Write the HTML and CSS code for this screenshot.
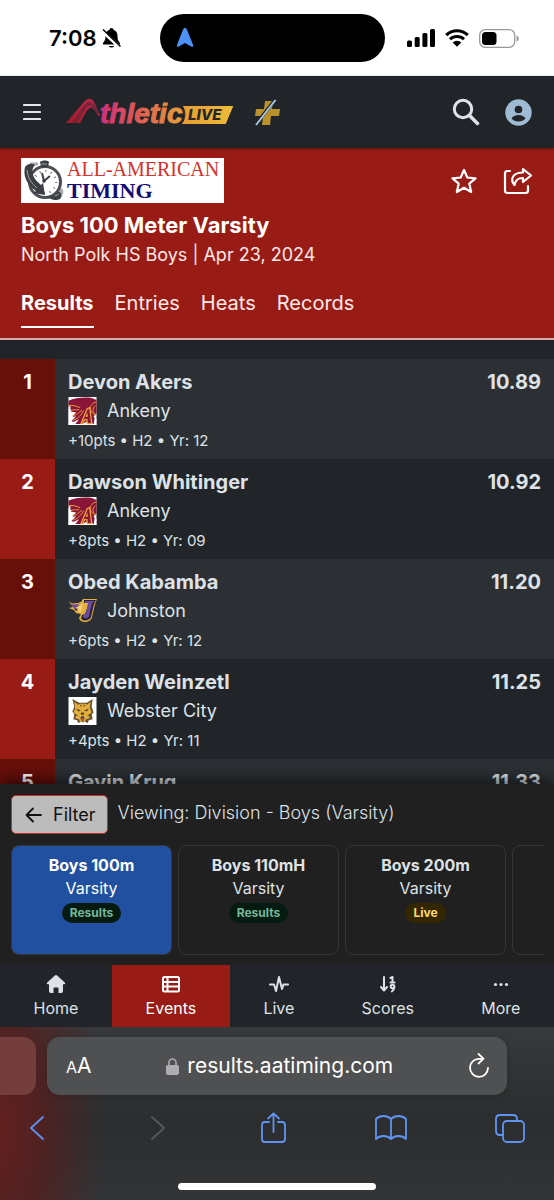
FILE: index.html
```html
<!DOCTYPE html>
<html lang="en">
<head>
<meta charset="utf-8">
<meta name="viewport" content="width=device-width, initial-scale=1">
<title>Boys 100 Meter Varsity - AthleticLIVE</title>
<link rel="stylesheet" href="styles.css">
</head>
<body>
<svg class="defs" width="0" height="0" aria-hidden="true">
  <symbol id="ankeny" viewBox="0 0 29 29">
    <path fill="#fff" d="M0 0h29v29H0z"/>
    <path fill="#8b1538" d="M0 4C6 1 16 0 24 1l5 2v14l-3 3 3 5v3h-4l-1-4-4 1-6 3H7l4-5-6 3H2l6-6-5 1 5-5-6-1V9l-2 1z"/>
    <path fill="none" stroke="#e8a33a" stroke-width="1" d="M0 9c5-1 9 1 12 2M1 15c4-3 6-1 10-2M4 19c4 1 7-4 10-5M5 24c6-2 8-6 11-10M29 5c-9 3-8 10-1 14M28 9c-4 3-3 7 0 9"/>
    <path fill="#8b1538" stroke="#eea83d" stroke-width="1.300" d="M13 27.500 19.500 12l2.500-1 2 16.500h-4.500l-.5-4h-2.500l-1.500 4z"/>
    <path fill="#e8a33a" d="m17.500 20.500 2-4.500.5 4.500z"/>
    <path fill="#fff" d="M0 12l3 2-2 3 4 3-5 4zM0 24l6 2-2 3H0zM27 22l2 1v6h-3z"/>
  </symbol>
  <symbol id="johnston" viewBox="0 0 29 26">
    <path fill="#e5b23f" d="M0 3c4 4 8 2 13 1l2-3h14l-2 5-3 13c-1 6-12 7-13 1l2-4-5-1-2-3-5-2 4-1z"/>
    <path fill="#29223a" d="M16 2h12l-2 4-3 13c-1 4-9 5-10 1l1-3 3-1 4-11h-5z"/>
    <path fill="#6c4a9c" d="M17 3h9l-1 2h-1l-3 13c-1 3-6 3-6 0l1-2h2l2-11h-3zM2 5c4 3 7 1 10 0l-3 3 4-1-3 4H7L4 8z"/>
    <path fill="#f3cf79" d="M11 8l4-2-2 8-4-1 2-2-4-1z"/>
    <path fill="#29223a" d="M8 4l3-2-1 3zM6 10l4 2-2 1z"/>
  </symbol>
  <symbol id="webster" viewBox="0 0 29 29">
    <path fill="#fff" d="M0 0h29v29H0z"/>
    <path fill="#6a5030" d="M4 2l7 4h8l6-4-1 8 2 6-2 2 1 5-4 1-1 3-4-2-1 2-1-2-4 2-1-3-4-1 1-5-2-3 2-5z"/>
    <path fill="#e2b03a" d="M6 5l4 3 2-1h5l2 1 4-3-1 6 2 5-3 2 1 4-4 1-1 3-2-2h-1l-2 2-1-3-4-1 1-4-3-2 2-4z"/>
    <path fill="#5b4326" d="M12 8l1 3 .5-3zM15.500 8l.5 3 1-3zM8 12l5 2-3 1zM21 12l-5 2 3 1zM13 16h3l.5 1.500-2 1.500-2-1.500zM12 20h5l-1 4h-3zM7 18l3 1-3 1zM22 18l-3 1 3 1z"/>
    <path fill="#d55849" d="M13.500 22h2v2h-2z"/>
    <path fill="#fff" d="M12 20h1v1.500zM16 20h1l-1 1.500z"/>
  </symbol>
</svg>

<div class="screen">
  <div class="status">
    <div class="status-left">
      <span class="clock">7:08</span>
      <svg width="19" height="22" viewBox="0 0 19 22" aria-label="Silent">
        <path d="M9.500 1c-1.200 0-2 .8-2 1.800C4.800 3.700 3.500 6 3.500 9c0 4-1 5-2.500 7v1.500h17V16c-1.500-2-2.500-3-2.500-7 0-3-1.300-5.300-4-6.200 0-1-.8-1.800-2-1.800zM6.700 19a3 2.500 0 0 0 5.600 0z"/>
        <path d="M0 3.500 18 20.500" stroke="#fff" stroke-width="3.500"/>
        <path d="M1 2.500 18.500 19.500" stroke="#000" stroke-width="1.500"/>
      </svg>
    </div>
    <div class="island">
      <svg width="18" height="20" viewBox="0 0 18 20" aria-hidden="true"><path fill="#4d91f7" d="M9 0c1 0 1.500.6 2 1.700l6 15c.6 1.700-.4 2.700-1.800 1.900L9 15l-6.200 3.600C1.400 19.400.4 18.400 1 16.700l6-15C7.500.6 8 0 9 0z"/></svg>
    </div>
    <div class="status-right">
      <svg width="28" height="18" viewBox="0 0 28 18" aria-label="Signal"><rect y="11.500" width="5" height="6.500" rx="1.500"/><rect x="7.700" y="8" width="5" height="10" rx="1.500"/><rect x="15.400" y="4" width="5" height="14" rx="1.500"/><rect x="23" width="5" height="18" rx="1.500"/></svg>
      <svg width="24" height="18" viewBox="0 0 24 18" aria-label="Wi-Fi"><path d="M1.200 6.200a15.500 15.500 0 0 1 21.600 0M5 10.300a10 10 0 0 1 14 0" fill="none" stroke="#000" stroke-width="3"/><path d="M7.700 13.500a6.200 6.200 0 0 1 8.600 0L12 17.800z"/></svg>
      <svg width="40" height="19" viewBox="0 0 40 19" aria-label="Battery"><rect x=".7" y=".7" width="35" height="17.600" rx="5.500" fill="none" stroke="#999" stroke-width="1.300"/><rect x="3" y="3" width="14.500" height="13" rx="3.500"/><path fill="#999" d="M37.500 6.500c3 1 3 5 0 6z"/></svg>
    </div>
  </div>

  <header class="topbar">
    <button class="icon-btn" aria-label="Menu"><svg width="18" height="18" viewBox="0 0 18 18"><path d="M1 2h16M1 9h16M1 16h16" stroke="#e4e8ee" stroke-width="2.200" stroke-linecap="round"/></svg></button>
    <a class="brand" href="#" aria-label="AthleticLIVE">
      <svg width="168" height="36" viewBox="0 -2 168 36">
        <defs>
          <linearGradient id="bg" gradientUnits="userSpaceOnUse" x1="34" y1="0" x2="118" y2="0"><stop offset="0" stop-color="#cb2f7c"/><stop offset=".45" stop-color="#dd5a52"/><stop offset="1" stop-color="#e5a33a"/></linearGradient>
          <linearGradient id="ag" x1="0" y1="1" x2="1" y2="0"><stop offset="0" stop-color="#a31d2b"/><stop offset="1" stop-color="#b8274f"/></linearGradient>
          <linearGradient id="lg" x1="0" y1="0" x2="1" y2="0"><stop offset="0" stop-color="#e79a32"/><stop offset="1" stop-color="#eebc3c"/></linearGradient>
        </defs>
        <path fill="url(#ag)" d="M0 27 17 7c4-5 8-6 11-1l6 13-2 1c-3-6-6-9-8-8-3 1-6 8-10 15z"/>
        <path fill="none" stroke="#25282d" stroke-width=".8" d="M7 27C13 19 18 9 22 7s7 5 11 10M10 27c5-8 8-15 12-18 3-2 6 4 10 9"/>
        <text class="brand-word" x="34" y="27" fill="url(#bg)">thletic</text>
        <path fill="url(#lg)" stroke="#212529" stroke-width="1" d="M116 9.500h52l-8 19h-45c5-6 5-13 1-19z"/>
        <text class="brand-live" x="122" y="24">LIVE</text>
      </svg>
    </a>
    <a class="plus" href="#" aria-label="Plus"><svg width="27" height="28" viewBox="0 0 27 28"><path fill="#b9922b" d="M11 2h8l-1 8h8l-1 7h-8l-1 9H8l1-9H1l1-7h8z"/><path d="M21 1 2 25" stroke="#22262a" stroke-width="3.500"/><path d="M21.500 1 2 26" stroke="#a9cbe9" stroke-width="1.900"/></svg></a>
    <button class="icon-btn search" aria-label="Search"><svg width="28" height="28" viewBox="0 0 28 28"><circle cx="11" cy="11" r="8.700" fill="none" stroke="#dfe3e8" stroke-width="3"/><path d="m17.500 17.500 8 8" stroke="#dfe3e8" stroke-width="3.500" stroke-linecap="round"/></svg></button>
    <button class="icon-btn" aria-label="Account"><svg width="27" height="27" viewBox="0 0 27 27"><circle cx="13.500" cy="13.500" r="13.200" fill="#9fbbd3"/><circle cx="13.500" cy="10.500" r="3.800" fill="#212529"/><path fill="#212529" d="M6.500 19.500c2-4.800 12-4.800 14 0-3 4-11 4-14 0z"/></svg></button>
  </header>

  <section class="event">
    <div class="event-top">
      <svg class="sponsor" width="203" height="45" viewBox="0 0 203 45" role="img" aria-label="All-American Timing">
        <path fill="#fff" d="M0 0h203v45H0z"/>
        <path fill="none" stroke="#a7a9ac" stroke-width="3" d="M9 6h8M40 31c2 4 0 8-5 8"/>
        <circle cx="24" cy="24" r="15.500" fill="#fff" stroke="#4a4d52" stroke-width="3"/>
        <circle cx="24" cy="24" r="11" fill="none" stroke="#77797d" stroke-width="2.500" stroke-dasharray="1 4.760"/>
        <path fill="#3b3e43" d="M4 9c3-4 7-4 10-2-5 5-3 13 6 20l2-2 2 12-12-2 3-2C5 26 2 17 4 9zM19 4c2-2 8-2 9 0l-1 5h-7zM26 39l7-1 5-5c4 4 3 9-3 9-4 0-5-1-9-3z"/>
        <path stroke="#3b3e43" stroke-width="2" fill="none" d="m21 15 2 8 6-5"/><circle cx="23" cy="23" r="1.800" fill="#3b3e43"/>
        <path fill="none" stroke="#bbb" stroke-width=".8" d="M6 12c1 8 4 13 10 18M20 6h6M34 38l4-2"/>
        <text class="sponsor-a" x="46" y="18">ALL-AMERICAN</text>
        <text class="sponsor-b" x="46" y="40">TIMING</text>
      </svg>
      <div class="event-actions">
        <button class="icon-btn" aria-label="Favorite"><svg width="28" height="28" viewBox="0 0 28 28"><path fill="none" stroke="#fff" stroke-width="2.200" stroke-linejoin="round" d="m14 3 3.300 7.500 8.200.8-6.200 5.400 1.900 8.300-7.200-4.300L6.800 25l1.900-8.300-6.200-5.400 8.200-.8z"/></svg></button>
        <button class="icon-btn" aria-label="Share event"><svg width="30" height="28" viewBox="0 0 30 28"><g fill="none" stroke="#fff" stroke-width="2.200" stroke-linejoin="round" stroke-linecap="round"><path d="M7 4H4.500Q2 4 2 6.500v17Q2 26 4.500 26h18q2.500 0 2.500-2.500V19"/><path d="m20 2 8 6.500-8 6.500v-4c-5 0-7.500 1.500-8.500 7-5-6-1.500-12.500 8.500-12.500z"/></g></svg></button>
      </div>
    </div>
    <h1>Boys 100 Meter Varsity</h1>
    <p class="meet">North Polk HS Boys | Apr 23, 2024</p>
    <nav class="tabs" aria-label="Event views">
      <a class="active" href="#" aria-current="page">Results</a><a href="#">Entries</a><a href="#">Heats</a><a href="#">Records</a>
    </nav>
  </section>

  <main class="results">
    <table aria-label="Results">
      <tbody>
        <tr><td class="rank">1</td><td class="athlete"><div class="name">Devon Akers</div><div class="school"><svg class="team" aria-hidden="true"><use href="#ankeny"/></svg>Ankeny</div><div class="meta">+10pts • H2 • Yr: 12</div></td><td class="mark">10.89</td></tr>
        <tr><td class="rank">2</td><td class="athlete"><div class="name">Dawson Whitinger</div><div class="school"><svg class="team" aria-hidden="true"><use href="#ankeny"/></svg>Ankeny</div><div class="meta">+8pts • H2 • Yr: 09</div></td><td class="mark">10.92</td></tr>
        <tr><td class="rank">3</td><td class="athlete"><div class="name">Obed Kabamba</div><div class="school"><svg class="team" aria-hidden="true"><use href="#johnston"/></svg>Johnston</div><div class="meta">+6pts • H2 • Yr: 12</div></td><td class="mark">11.20</td></tr>
        <tr><td class="rank">4</td><td class="athlete"><div class="name">Jayden Weinzetl</div><div class="school"><svg class="team" aria-hidden="true"><use href="#webster"/></svg>Webster City</div><div class="meta">+4pts • H2 • Yr: 11</div></td><td class="mark">11.25</td></tr>
        <tr><td class="rank">5</td><td class="athlete"><div class="name">Gavin Krug</div></td><td class="mark">11.33</td></tr>
      </tbody>
    </table>
  </main>

  <section class="picker">
    <div class="filter-row">
      <button class="filter"><svg width="17" height="16" viewBox="0 0 17 16" aria-hidden="true"><path d="M16 8H1.500M8 1.500 1.500 8 8 14.500" fill="none" stroke="#111" stroke-width="1.800" stroke-linecap="round" stroke-linejoin="round"/></svg>Filter</button>
      <span class="viewing">Viewing: Division - Boys (Varsity)</span>
    </div>
    <div class="cards">
      <a class="card selected" href="#"><b>Boys 100m</b><span>Varsity</span><span class="badge done">Results</span></a>
      <a class="card" href="#"><b>Boys 110mH</b><span>Varsity</span><span class="badge done">Results</span></a>
      <a class="card" href="#"><b>Boys 200m</b><span>Varsity</span><span class="badge live">Live</span></a>
      <a class="card" href="#" aria-label="Next event"></a>
    </div>
  </section>

  <nav class="bottom-nav" aria-label="Main">
    <a href="#"><svg width="20" height="20" viewBox="0 0 20 20" aria-hidden="true"><path fill="currentColor" d="M10 1q.7 0 1.200.5L19 8.800q.8 1.200-.6 1.500H17V17q0 2-2 2h-2.500v-4.500q0-1-1-1h-3q-1 0-1 1V19H5q-2 0-2-2v-6.700H1.600Q.2 10 1 8.800l7.800-7.300Q9.300 1 10 1z"/></svg>Home</a>
    <a class="active" href="#" aria-current="page"><svg width="20" height="20" viewBox="0 0 20 20" aria-hidden="true"><g fill="none" stroke="currentColor" stroke-width="2"><rect x="2" y="3" width="16" height="14.500" rx="1.500"/><path d="M2 8h16M2 12.500h16M6.500 3v14.500"/></g></svg>Events</a>
    <a href="#"><svg width="20" height="20" viewBox="0 0 20 20" aria-hidden="true"><path fill="none" stroke="currentColor" stroke-width="2" stroke-linecap="round" stroke-linejoin="round" d="M1 10.500h4L7 17l3-14 3 12 1.500-4.500H19"/></svg>Live</a>
    <a href="#"><svg width="20" height="20" viewBox="0 0 20 20" aria-hidden="true"><g fill="none" stroke="currentColor" stroke-width="2" stroke-linecap="round" stroke-linejoin="round"><path d="M6 3v13M3 13l3 3.500L9 13M12.500 4 14.500 3v5M12.500 8.500h4"/><circle cx="14.500" cy="12.500" r="1.800"/><path d="M16.300 13c0 2-1 3.500-2.500 4.500"/></g></svg>Scores</a>
    <a href="#"><svg width="20" height="20" viewBox="0 0 20 20" aria-hidden="true"><g fill="currentColor"><circle cx="4.500" cy="10.500" r="1.600"/><circle cx="10" cy="10.500" r="1.600"/><circle cx="15.500" cy="10.500" r="1.600"/></g></svg>More</a>
  </nav>

  <footer class="browser">
    <div class="url-row">
      <div class="prev-tab"></div>
      <div class="url-bar">
        <button class="text-size" aria-label="Page settings"><small>A</small>A</button>
        <button class="address"><svg width="13" height="17" viewBox="0 0 13 17" aria-hidden="true"><rect y="7" width="13" height="10" rx="2" fill="#aeaeb2"/><path d="M3 8V4.500a3.500 3.500 0 0 1 7 0V8" fill="none" stroke="#aeaeb2" stroke-width="1.600"/></svg>results.aatiming.com</button>
        <button class="icon-btn reload" aria-label="Reload"><svg width="22" height="26" viewBox="0 0 22 26"><path d="M15 5.800H11A9 9 0 1 0 20 15M10.500 1l5 4.700-5 4.800" fill="none" stroke="#fff" stroke-width="1.800" stroke-linecap="round" stroke-linejoin="round"/></svg></button>
      </div>
    </div>
    <div class="tools">
      <button class="icon-btn" aria-label="Back"><svg width="30" height="32" viewBox="0 0 30 32"><path d="M21 5 9 16l12 11"/></svg></button>
      <button class="icon-btn off" aria-label="Forward" disabled><svg width="30" height="32" viewBox="0 0 30 32"><path d="m12 5 12 11-12 11"/></svg></button>
      <button class="icon-btn" aria-label="Share"><svg width="30" height="32" viewBox="0 0 30 32"><path d="M11 10H7q-3 0-3 3v14q0 3 3 3h17q3 0 3-3V13q0-3-3-3h-4M15.500 20V1.500M10 6.500l5.500-5 5.500 5"/></svg></button>
      <button class="icon-btn" aria-label="Bookmarks"><svg width="32" height="32" viewBox="0 0 32 32"><path d="M16 7c-4-4-11-4-15 0v20c4-4 11-4 15 0 4-4 11-4 15 0V7C27 3 20 3 16 7zv20"/></svg></button>
      <button class="icon-btn" aria-label="Tabs"><svg width="30" height="32" viewBox="0 0 30 32"><path d="M8 23H5q-4 0-4-4V7q0-4 4-4h13q4 0 4 4v2"/><rect x="8" y="9" width="21" height="21" rx="4"/></svg></button>
    </div>
    <div class="indicator"></div>
  </footer>
</div>
</body>
</html>
```

FILE: styles.css
```css
* { box-sizing: border-box; }
body { margin: 0; background: #212529; color: #dee2e6; font-family: Inter, "Liberation Sans", sans-serif; }
button { font: inherit; color: inherit; }
a { color: inherit; text-decoration: none; }
svg { display: block; flex: none; }
.defs { position: absolute; }
.icon-btn { display: block; padding: 0; border: 0; background: none; }
.screen { display: flex; flex-direction: column; height: 100vh; overflow: hidden; }

.status { display: grid; grid-template-columns: 1fr 225px 1fr; align-items: center; padding: 14px 9px 14px 0; background: #fff; color: #000; }
.status-left { display: flex; align-items: center; gap: 5px; padding-left: 49px; }
.clock { font-size: 22px; line-height: 24px; font-weight: 600; }
.island { display: flex; align-items: center; height: 48px; padding-left: 16px; border-radius: 24px; background: #000; }
.status-right { display: flex; align-items: center; gap: 10px; padding-left: 22px; }

.topbar { position: relative; display: flex; align-items: center; padding: 18px 22px 18px 23px; background: #212529; box-shadow: 0 1px 3px rgba(0, 0, 0, .4); }
.brand { margin-left: 25px; }
.brand-word { font: italic 700 28px "Liberation Sans", sans-serif; stroke: url(#bg); stroke-width: 1px; }
.brand-live { font: italic 800 15px Inter, sans-serif; fill: #24272a; }
.plus { margin: 2px auto 0 20px; }
.search { margin-right: 25px; }
.topbar > * { display: flex; align-items: center; }

.event { padding: 10px 21px 10px; background: #981c15; color: #fff; border-bottom: 2px solid #d8aaa7; }
.event-top { display: flex; justify-content: space-between; align-items: center; }
.event-actions { display: flex; gap: 25px; }
.sponsor-a { font: 20px "Liberation Serif", serif; fill: #d5322c; }
.sponsor-b { font: bold 22px "Liberation Serif", serif; fill: #120d73; }
h1 { margin: 8px 0 0; font-size: 22px; line-height: 28px; font-weight: 700; }
.meet { margin: 4px 0 0; font-size: 18px; line-height: 24px; color: #fbe9e7; }
.tabs { display: flex; gap: 21px; margin-top: 20px; font-size: 20px; line-height: 32px; color: #fbe9e7; }
.tabs a { padding-bottom: 7px; border-bottom: 2px solid transparent; }
.tabs .active { font-weight: 700; color: #fff; border-color: #fff; }

.results { flex: 1; min-height: 0; overflow: hidden; padding-top: 19px; }
table { width: 100%; border-collapse: collapse; }
td { padding: 8px 0; vertical-align: top; }
tr { background: #212529; }
tr:nth-child(odd) { background: #2c3034; }
.rank { width: 55px; background: #981c15; color: #fff; text-align: center; font-size: 20px; line-height: 30px; font-weight: 700; }
tr:nth-child(odd) .rank { background: #670f09; }
.athlete { padding-left: 13px; }
.name, .mark { font-size: 20px; line-height: 30px; font-weight: 700; }
.mark { padding-right: 13px; text-align: right; }
.school { display: flex; align-items: center; gap: 10px; font-size: 18px; line-height: 28px; }
.team { width: 29px; height: 28px; }
.meta { margin-top: 6px; font-size: 15px; line-height: 20px; }

.picker { position: relative; padding: 11px 10px 10px 11px; background: #202020; box-shadow: 0 -4px 14px rgba(0, 0, 0, .6); }
.filter-row { display: flex; align-items: center; gap: 10px; }
.filter { display: flex; align-items: center; gap: 11px; padding: 0 11px 0 13px; height: 39px; border: 1px solid #c4302b; border-radius: 5px; background: #bcbcbc; color: #111; font-size: 18px; }
.viewing { padding-bottom: 3px; font-size: 18px; line-height: 24px; font-weight: 300; }
.cards { display: flex; gap: 6px; margin-top: 11px; overflow: hidden; }
.card { flex: none; display: flex; flex-direction: column; align-items: center; width: 161px; height: 110px; padding-top: 8px; border: 1px solid #343638; border-radius: 8px; font-size: 16px; line-height: 23px; }
.card b { font-weight: 700; }
.selected { background: #2150a1; color: #fff; }
.badge { margin-top: 3px; padding: 0 8px; border-radius: 10px; font-size: 12px; line-height: 20px; font-weight: 700; }
.done { background: #051b11; color: #75b798; }
.live { background: #332701; color: #ffda6a; }

.bottom-nav { display: flex; position: relative; background: #212529; }
.bottom-nav a { flex: 1 1 auto; display: flex; flex-direction: column; align-items: center; gap: 3px; padding: 9px 0 8px; font-size: 16px; line-height: 22px; }
.bottom-nav .active { background: #981c15; color: #fff; }

.browser { padding-bottom: 10px; background: radial-gradient(100px 260px at 0 60%, #632020 0, rgba(85, 31, 31, .85) 40%, rgba(60, 45, 46, 0) 100%), linear-gradient(#38393b, #2c2d2e 55%, #333436); }
.url-row { display: flex; gap: 11px; padding: 10px 47px 0 0; }
.prev-tab { width: 36px; border-radius: 0 13px 13px 0; background: #743e3d; }
.url-bar { flex: 1; display: flex; align-items: center; justify-content: space-between; height: 58px; padding: 0 17px 0 19px; border-radius: 13px; background: #4f5052; color: #fff; box-shadow: 0 2px 10px rgba(0, 0, 0, .15); }
.text-size, .address { display: flex; align-items: baseline; padding: 0; border: 0; background: none; font-size: 21px; line-height: 26px; }
.text-size small { font-size: 16px; }
.address { align-items: center; gap: 8px; }
.tools { display: flex; justify-content: space-between; padding: 17px 29px 0 22px; }
.tools svg { fill: none; stroke: #6193f5; stroke-width: 1.8px; stroke-linecap: round; stroke-linejoin: round; }
.tools .off svg { stroke: #58595b; }
.indicator { width: 198px; height: 7px; margin: 39px auto 0; border-radius: 4px; background: #fff; }
```
